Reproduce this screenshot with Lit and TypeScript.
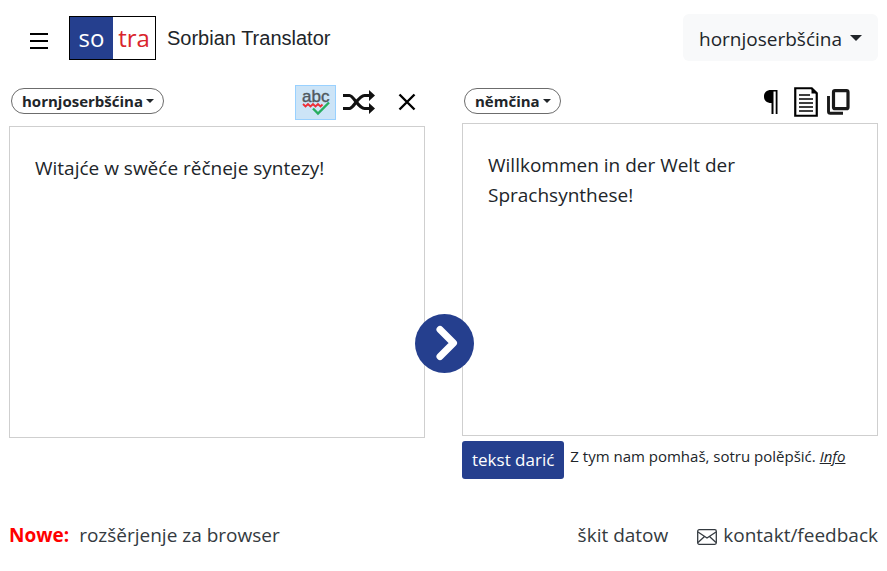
import { LitElement, html, css, svg } from "lit";
import { customElement, property, state } from "lit/decorators.js";

const LANGUAGES = ["hornjoserbšćina", "delnjoserbšćina", "němčina"];

@customElement("language-select")
class LanguageSelect extends LitElement {
  @property() value = "";
  @property() label = "";
  @property() variant = "pill";

  static styles = css`
    :host { display: block; }
    .wrap { display: grid; align-items: center; }
    select, .caret { grid-area: 1 / 1; }
    select {
      appearance: none;
      field-sizing: content;
      box-sizing: border-box;
      margin: 0;
      color: #212529;
      font-family: "Open Sans", "Noto Sans", sans-serif;
      cursor: pointer;
    }
    .caret {
      justify-self: end;
      pointer-events: none;
      border: solid transparent;
      border-bottom: 0;
      border-top-color: #212529;
    }
    .pill select {
      height: 26px;
      padding: 0 20px 0 10px;
      border: 1px solid #6c6c6c;
      border-radius: 13px;
      background: #fff;
      font-size: 15px;
      font-weight: 700;
    }
    .pill .caret { margin-right: 10px; border-width: 4px; border-bottom: 0; }
    .large select {
      height: 47px;
      padding: 2px 36px 0 16px;
      border: 0;
      border-radius: 6px;
      background: #f8f9fa;
      font-size: 19px;
    }
    .large .caret { margin-right: 16px; border-width: 6px; border-bottom: 0; }
  `;

  render() {
    return html`<span class="wrap ${this.variant}">
      <select aria-label=${this.label}>
        ${LANGUAGES.map((l) => html`<option ?selected=${l === this.value}>${l}</option>`)}
      </select>
      <span class="caret"></span>
    </span>`;
  }
}

const menuIcon = svg`<svg width="18" height="16" viewBox="0 0 18 16"><path d="M0 1h18M0 8h18M0 15h18" stroke="#000" stroke-width="2"/></svg>`;

const spellIcon = svg`<svg width="29" height="33" viewBox="0 0 29 33">
  <text x="1" y="16" font-family="Liberation Sans, sans-serif" font-size="17" fill="#50595f" stroke="#50595f" stroke-width=".4">abc</text>
  <path d="M2 18l2.500 2.500 2.500-2.500 2.500 2.500 2.500-2.500 2.500 2.500 2.500-2.500 2.500 2.500 2-2" fill="none" stroke="#ee2f38" stroke-width="1.800"/>
  <path d="M12 22.500l5 5L28 16.500" fill="none" stroke="#27ae60" stroke-width="2.400"/></svg>`;

const shuffleIcon = svg`<svg width="34" height="24" viewBox="0 0 34 24">
  <g fill="none" stroke="#111" stroke-width="3.200"><path d="M1 5.500h6.500c4 0 9 13 15 13H28"/><path d="M1 18.500h6.500c4 0 9-13 15-13H28"/></g>
  <path d="M27 0L33 5.500 27 11zM27 13L33 18.500 27 24z" fill="#111"/></svg>`;

const closeIcon = svg`<svg width="18" height="18" viewBox="0 0 18 18"><path d="M1.500 1.500l15 15M16.500 1.500l-15 15" stroke="#000" stroke-width="2.400"/></svg>`;

const pilcrowIcon = svg`<svg width="14" height="25" viewBox="0 0 14 25">
  <path d="M7 0h6.500v24h-1.800V1.500H9.500v22.500H7.500V13C2.500 13 0 10.500 0 6.500S2.500 0 7 0z" fill="#000"/></svg>`;

const documentIcon = svg`<svg width="24" height="30" viewBox="0 0 24 30">
  <path d="M1.250 1.250h16.500l5 5v22.500H1.250z" fill="#fff" stroke="#000" stroke-width="2.200"/>
  <path d="M17.500 1v5.500H23z" fill="#000"/>
  <path d="M5 8h11M5 12h14M5 16h14M5 20h14M5 24h14" stroke="#000" stroke-width="1.700"/></svg>`;

const copyIcon = svg`<svg width="23" height="26" viewBox="0 0 23 26">
  <rect x="6.500" y="1.700" width="14.500" height="18" rx="1.500" fill="none" stroke="#1a1a1a" stroke-width="3.200"/>
  <path d="M1.500 7v15.500a1.800 1.800 0 0 0 1.800 1.800H16" fill="none" stroke="#1a1a1a" stroke-width="2.900"/></svg>`;

const arrowIcon = svg`<svg width="59" height="59" viewBox="0 0 59 59"><circle cx="29.500" cy="29.500" r="29.500" fill="#253f8e"/>
  <path d="M25 15.500L38.500 29 25 42.500" fill="none" stroke="#fff" stroke-width="7" stroke-linecap="round" stroke-linejoin="round"/></svg>`;

const mailIcon = svg`<svg width="20" height="16" viewBox="0 0 20 16" fill="none" stroke="#343a40" stroke-width="1.300">
  <rect x=".7" y=".7" width="18.600" height="14.600" rx="1.500"/><path d="M1 3l9 6 9-6M1 13.500l6.500-6M19 13.500l-6.500-6"/></svg>`;

@customElement("app-root")
class AppRoot extends LitElement {
  @state() private source = "Witajće w swěće rěčneje syntezy!";

  static styles = css`
    :host {
      display: block;
      padding: 14px 9px 20px;
      background: #fff;
      color: #212529;
      font: 19px/30px "Open Sans", "Noto Sans", sans-serif;
    }
    svg { display: block; }
    button {
      margin: 0;
      padding: 0;
      border: 0;
      background: none;
      color: inherit;
      font: inherit;
      cursor: pointer;
    }
    header { display: flex; align-items: center; height: 47px; }
    .menu { padding: 6px 21px 0; }
    .brand {
      display: flex;
      align-items: center;
      gap: 11px;
      color: inherit;
      text-decoration: none;
      font: 20px/30px "Liberation Sans", Arial, sans-serif;
    }
    .logo {
      display: grid;
      grid-template-columns: 43px 42px;
      border: 1px solid #000;
      font: 24px/42px "Open Sans", sans-serif;
      text-align: center;
    }
    .so { background: #253f8e; color: #fff; }
    .tra { color: #d9252c; }
    .site-language { margin-left: auto; }
    main {
      position: relative;
      display: grid;
      grid-template-columns: 1fr 1fr;
      gap: 37px;
      margin-top: 22px;
    }
    .panel { min-width: 0; }
    .tools {
      display: flex;
      align-items: center;
      box-sizing: border-box;
      height: 40px;
      padding: 0 28px 4px 2px;
    }
    .source .tools { height: 43px; padding: 0 9px 7px 2px; }
    .actions { display: flex; align-items: center; gap: 6px; margin-left: auto; padding-top: 2px; }
    .target .actions { gap: 9px; }
    .target .actions .document { margin-left: 7px; }
    .spell {
      padding: 0 5px;
      border: 1px solid #99d1ff;
      background: #cce4f7;
    }
    .clear { margin-left: 16px; }
    .box {
      display: block;
      box-sizing: border-box;
      width: 100%;
      margin: 0;
      padding: 26px 25px 44px;
      border: 1px solid #cfcfcf;
      border-radius: 0;
      background: #fff;
      color: inherit;
      font: inherit;
      resize: none;
      outline: 0;
    }
    .output { min-height: 313px; }
    .translate {
      position: absolute;
      left: 50%;
      top: 231px;
      margin-left: -29px;
      border-radius: 50%;
    }
    .donate { display: flex; align-items: flex-start; gap: 6px; margin-top: 5px; }
    .donate button {
      flex: none;
      height: 38px;
      padding: 0 10px;
      border-radius: 3px;
      background: #253f8e;
      color: #fff;
      font-size: 17px;
    }
    .donate p { margin: 0; font-size: 15px; }
    .donate a { color: inherit; font-style: italic; }
    footer { display: flex; align-items: center; margin-top: 41px; color: #343a40; }
    footer a { color: inherit; text-decoration: none; }
    .new { margin-right: 10px; color: #f00; }
    .privacy { margin-left: auto; }
    .contact { display: flex; align-items: center; gap: 6px; margin-left: 29px; }
    .contact svg { margin-top: 3px; }
  `;

  render() {
    return html`
      <header>
        <button class="menu" aria-label="Menu">${menuIcon}</button>
        <a class="brand" href="#">
          <span class="logo"><span class="so">so</span><span class="tra">tra</span></span>
          <span>Sorbian Translator</span>
        </a>
        <language-select class="site-language" variant="large" label="Interface language" value="hornjoserbšćina"></language-select>
      </header>
      <main>
        <section class="panel source">
          <div class="tools">
            <language-select label="Source language" value="hornjoserbšćina"></language-select>
            <div class="actions">
              <button class="spell" aria-label="Spell check">${spellIcon}</button>
              <button aria-label="Swap languages">${shuffleIcon}</button>
              <button class="clear" aria-label="Clear text" @click=${() => (this.source = "")}>${closeIcon}</button>
            </div>
          </div>
          <textarea class="box" rows="8" aria-label="Source text" spellcheck="false" .value=${this.source}
            @input=${(e: Event) => (this.source = (e.target as HTMLTextAreaElement).value)}></textarea>
        </section>
        <section class="panel target">
          <div class="tools">
            <language-select label="Target language" value="němčina"></language-select>
            <div class="actions">
              <button aria-label="Show paragraphs">${pilcrowIcon}</button>
              <button class="document" aria-label="Open document">${documentIcon}</button>
              <button aria-label="Copy">${copyIcon}</button>
            </div>
          </div>
          <div class="box output">Willkommen in der Welt der Sprachsynthese!</div>
          <div class="donate">
            <button>tekst darić</button>
            <p>Z tym nam pomhaš, sotru polěpšić. <a href="#info">Info</a></p>
          </div>
        </section>
        <button class="translate" aria-label="Translate">${arrowIcon}</button>
      </main>
      <footer>
        <strong class="new">Nowe:</strong>
        <a href="#extension">rozšěrjenje za browser</a>
        <a class="privacy" href="#privacy">škit datow</a>
        <a class="contact" href="#contact">${mailIcon}kontakt/feedback</a>
      </footer>
    `;
  }
}
